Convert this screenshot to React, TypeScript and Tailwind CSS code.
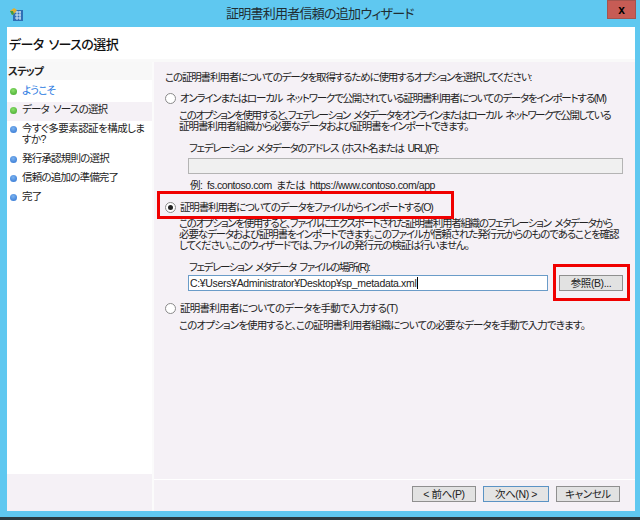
import React from 'react';

const steps = [
  { label: 'ようこそ', dot: 'green', link: true },
  { label: 'データ ソースの選択', dot: 'green', active: true },
  { label: '今すぐ多要素認証を構成しま', label2: 'すか?', dot: 'blue' },
  { label: '発行承認規則の選択', dot: 'blue' },
  { label: '信頼の追加の準備完了', dot: 'blue' },
  { label: '完了', dot: 'blue' },
];

function Radio({ checked }: { checked?: boolean }) {
  return (
    <span className="flex h-[11px] w-[11px] shrink-0 items-center justify-center rounded-full border border-[#8a8a8a] bg-white">
      {checked && <span className="h-[5px] w-[5px] rounded-full bg-[#222]" />}
    </span>
  );
}

function WizardButton({ children, focus, w }: { children: React.ReactNode; focus?: boolean; w: string }) {
  return (
    <button className={`${w} h-[16px] border text-[10.5px] leading-[14px] tracking-[-0.4px] text-[#222] ${focus ? 'border-[#5b93c4] bg-[#e4e4e4]' : 'border-[#8f8f8f] bg-[#e2e2e2]'}`}>
      {children}
    </button>
  );
}

export default function App() {
  return (
    <div className="relative flex h-[520px] w-[640px] flex-col overflow-hidden whitespace-nowrap bg-[#5fc8f0] font-['Liberation_Sans','Noto_Sans_CJK_JP',sans-serif] text-[#222] [font-feature-settings:'palt'] [word-spacing:2px]">
      {/* Title bar */}
      <div className="relative flex h-[27px] shrink-0 items-center justify-center text-[13px] tracking-[-0.75px] text-[#1f2d33]">
        <svg className="absolute left-[9px] top-[7px]" width="15" height="15" viewBox="0 0 15 15">
          <rect x="4" y="3" width="10" height="11" fill="#2f6fb5" />
          <path d="M6 5h6M6 8h6M6 11h6M8 4v9M11 4v9" stroke="#d5e8f7" strokeWidth="1" />
          <path d="M1 4 L5 1 L8 3 L5 7 L3 8 Z" fill="#e0b030" />
          <path d="M1 4 L3 8 L5 7 L4 4 Z" fill="#3a9a4a" />
        </svg>
        <span>証明書利用者信頼の追加ウィザード</span>
        <div className="absolute right-[4px] top-0 flex h-[19px] w-[29px] items-center justify-center border border-[#a5544e] bg-[#c75c55] text-[12px] font-bold leading-none tracking-normal text-black">
          x
        </div>
      </div>

      {/* Client area */}
      <div className="ml-[7px] mr-[5px] flex h-[484px] flex-col bg-white">
        <div className="flex h-[32px] shrink-0 items-center pl-[2px] pt-[4px] text-[13px] font-medium tracking-[-0.6px] text-[#111]">
          データ ソースの選択
        </div>
        <div className="h-[3px] shrink-0 bg-[#f9f9f9]" />

        <div className="flex min-h-0 flex-1">
          {/* Step list */}
          <div className="flex w-[145px] shrink-0 flex-col bg-[#f5f1f6]">
            <div className="flex h-[412px] flex-col bg-white text-[10.5px] tracking-[-0.8px]">
              <div className="flex h-[18px] items-center bg-[#f8f8f8] pl-[1px] font-bold leading-none">ステップ</div>
              <div className="mt-[3px] flex flex-col">
                {steps.map((s) => (
                  <div key={s.label} className={`flex items-start gap-[5px] pb-[6px] pl-[3px] pt-[2px] leading-[11px] ${s.active ? 'bg-[#f5f1f6]' : ''}`}>
                    <span className={`mt-[3px] h-[7px] w-[7px] shrink-0 rounded-full ${s.dot === 'green' ? 'bg-[radial-gradient(circle_at_45%_35%,#8be06a,#3fa52a)]' : 'bg-[radial-gradient(circle_at_45%_35%,#7db4f0,#2a6fd0)]'}`} />
                    <span className={s.label2 ? 'tracking-[-0.55px]' : s.link ? 'text-[#2a7ae2]' : ''}>
                      {s.label}
                      {s.label2 && <br />}
                      {s.label2}
                    </span>
                  </div>
                ))}
              </div>
            </div>
          </div>
          <div className="w-[2px] shrink-0 bg-[#fbfbfb]" />

          {/* Main panel */}
          <div className="flex min-w-0 flex-1 flex-col">
            <div className="h-[417px] bg-[#f5f1f6] pl-[11px] pr-[12px] pt-[8px] text-[10.5px] tracking-[-1.15px]">
              <p className="h-[14px] leading-[14px]">この証明書利用者についてのデータを取得するために使用するオプションを選択してください:</p>

              <div className="mt-[7px] flex h-[14px] items-center gap-[4px] leading-[14px] tracking-[-1.23px]">
                <Radio />
                <span>オンラインまたはローカル ネットワークで公開されている証明書利用者についてのデータをインポートする(M)</span>
              </div>
              <p className="mt-[5px] pl-[14px] leading-[11px]">
                <span className="tracking-[-1.44px]">このオプションを使用すると、フェデレーション メタデータをオンラインまたはローカル ネットワークで公開している</span>
                <br />
                <span className="tracking-[-1.05px]">証明書利用者組織から必要なデータおよび証明書をインポートできます。</span>
              </p>

              <p className="mt-[9px] h-[14px] pl-[24px] leading-[14px] tracking-[-1.25px]">フェデレーション メタデータのアドレス (ホスト名または URL)(F):</p>
              <div className="ml-[23px] mt-[3px] h-[16px] border border-[#b4b4b4] bg-[#f0f0f0]" />
              <p className="mt-[4px] h-[14px] pl-[25px] leading-[14px] tracking-[-0.42px]">例: fs.contoso.com または https://www.contoso.com/app</p>

              <div className="mt-[8px] flex h-[14px] items-center gap-[4px] leading-[14px]">
                <Radio checked />
                <span>証明書利用者についてのデータをファイルからインポートする(O)</span>
              </div>
              <p className="mt-[4px] pl-[14px] leading-[11px]">
                <span className="tracking-[-1.3px]">このオプションを使用すると、ファイルにエクスポートされた証明書利用者組織のフェデレーション メタデータから</span>
                <br />
                <span className="tracking-[-1.12px]">必要なデータおよび証明書をインポートできます。このファイルが信頼された発行元からのものであることを確認</span>
                <br />
                <span className="tracking-[-1.03px]">してください。このウィザードでは、ファイルの発行元の検証は行いません。</span>
              </p>

              <p className="mt-[9px] h-[14px] pl-[24px] leading-[14px] tracking-[-1.37px]">フェデレーション メタデータ ファイルの場所(R):</p>
              <div className="ml-[23px] mt-[1px] flex h-[16px] items-start gap-[11px]">
                <div className="flex h-[16px] w-[360px] items-center border border-[#6a9cc8] bg-white pl-[1px] text-[10.5px] leading-none tracking-[-0.33px]">
                  C:¥Users¥Administrator¥Desktop¥sp_metadata.xml
                  <span className="ml-[1px] h-[12px] w-px bg-black" />
                </div>
                <WizardButton w="w-[64px]">参照(B)...</WizardButton>
              </div>

              <div className="mt-[10px] flex h-[14px] items-center gap-[4px] leading-[14px] tracking-[-0.72px]">
                <Radio />
                <span>証明書利用者についてのデータを手動で入力する(T)</span>
              </div>
              <p className="mt-[5px] pl-[14px] leading-[11px] tracking-[-0.87px]">このオプションを使用すると、この証明書利用者組織についての必要なデータを手動で入力できます。</p>
            </div>

            {/* Footer */}
            <div className="mt-px flex flex-1 justify-end gap-[7px] bg-[#f5f1f6] pr-[15px] pt-[6px]">
              <WizardButton w="w-[64px]">&lt; 前へ(P)</WizardButton>
              <WizardButton w="w-[66px]" focus>次へ(N) &gt;</WizardButton>
              <WizardButton w="w-[64px]">キャンセル</WizardButton>
            </div>
          </div>
        </div>
      </div>

      <div className="mt-auto h-[3px] shrink-0 bg-[#2b3a40]" />

      {/* Red annotation boxes */}
      <div className="absolute left-[157px] top-[191px] h-[28px] w-[297px] border-[3px] border-[#f00000]" />
      <div className="absolute left-[553px] top-[264px] h-[37px] w-[77px] border-[3px] border-[#f00000]" />
    </div>
  );
}
